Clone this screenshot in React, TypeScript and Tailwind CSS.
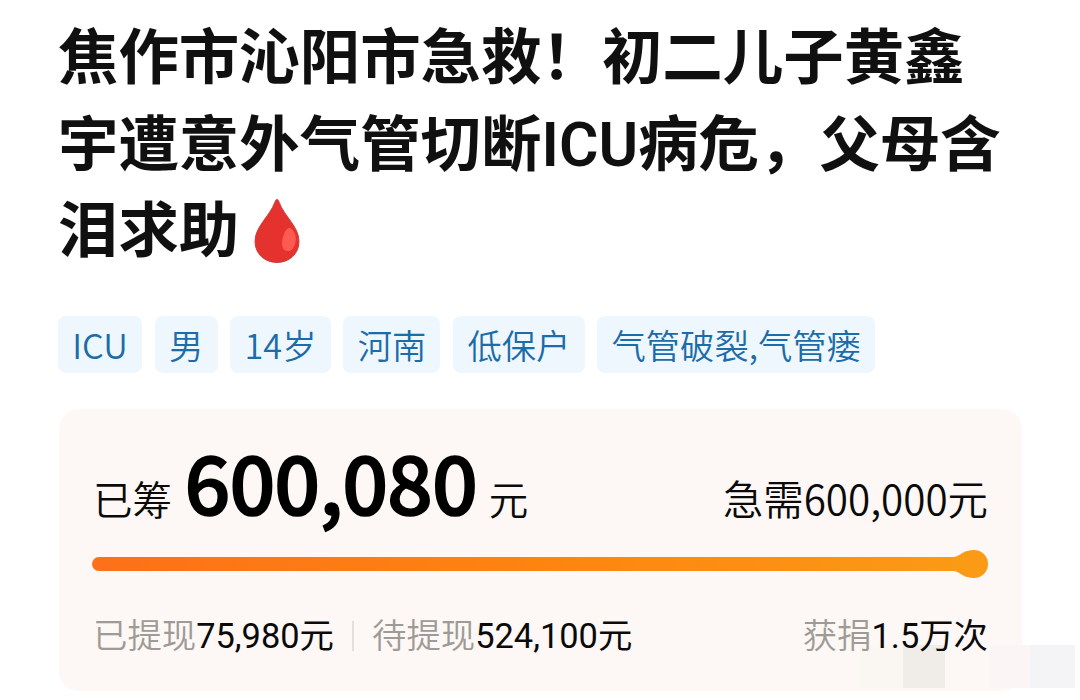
import React from 'react';

interface Stat {
  label: string;
  value: string;
}

const tags: string[] = ['ICU', '男', '14岁', '河南', '低保户', '气管破裂,气管瘘'];

const titleLines: string[] = ['焦作市沁阳市急救！初二儿子黄鑫', '宇遭意外气管切断ICU病危，父母含', '泪求助'];

const BloodDrop: React.FC = () => (
  <svg className="ml-[15px] mt-[9px] h-[66px] w-[46px]" viewBox="0 0 46 66">
    <path
      d="M23 1.5c-1.2 0-1.8 1.6-2.3 3C16 18 1 28.500 1 43.500 1 56 11 64.500 23 64.500S45 56 45 43.500C45 28.500 30 18 25.300 4.500c-.5-1.400-1.100-3-2.300-3z"
      fill="#e5322f"
      stroke="#c9423c"
      strokeWidth="1"
    />
    <path d="M36.500 30c4 3 6 8 5 14-1 6-4.500 9.500-8.500 9-4-.6-5.500-4.500-4.700-10.500.8-6 4-13.700 8.200-12.500z" fill="#ff5a50" />
  </svg>
);

const StatText: React.FC<Stat> = ({ label, value }) => (
  <span className="whitespace-nowrap">
    <span className="font-[350] text-[#9e9b96]">{label}</span>
    <span className="text-[#0a0a0a]">{value}</span>
  </span>
);

const ProgressBar: React.FC = () => (
  <div className="relative mt-[14px] h-7 w-[896px]">
    <div className="absolute left-0 top-[7px] h-[14px] w-[880px] rounded-l-full bg-linear-to-r from-[#fc7019] via-[#fd840f] to-[#fb9a15]" />
    <svg className="absolute right-0 top-0 h-7 w-9" viewBox="0 0 36 28">
      <path d="M0 7c5 0 7-2 11-4.300C14 1 18 0 22 0a14 14 0 0 1 0 28c-4 0-8-1-11-2.700C7 23 5 21 0 21z" fill="#fb9a15" />
    </svg>
  </div>
);

const App: React.FC = () => {
  return (
    <div className="relative h-[700px] w-[1080px] overflow-hidden bg-white pl-[59px] pt-4 font-['Noto_Sans_CJK_SC',sans-serif]">
      {/* Title */}
      <h1 className="-ml-px font-['Roboto','Noto_Sans_CJK_SC',sans-serif] text-[60.450px] font-semibold text-[#101010]">
        {titleLines.map((line, i) => (
          <span key={line} className="flex h-[86.500px] items-start whitespace-nowrap leading-[86.500px]">
            {line}
            {i === titleLines.length - 1 && <BloodDrop />}
          </span>
        ))}
      </h1>

      {/* Tags */}
      <div className="-ml-px mt-10 flex gap-[12.800px]">
        {tags.map(tag => (
          <span key={tag} className="h-[57px] whitespace-nowrap rounded-lg bg-[#eff7fe] px-[14.200px] text-[34.300px] font-[350] leading-[56px] text-[#1b6ca8]">
            {tag}
          </span>
        ))}
      </div>

      {/* Fundraising card */}
      <div className="relative mt-9 h-[282px] w-[963px] rounded-[20px] bg-[#fdf8f5] pl-[33px] pr-[34px] pt-[27px]">
        {/* Mosaic patch in the corner */}
        <div className="absolute left-[801px] top-[236px] flex h-[43px]">
          <div className="w-[43px] bg-[#faf6f2]" />
          <div className="w-[42px] bg-[#f0ede9]" />
          <div className="w-[45px] bg-[#fdf8f5]" />
          <div className="w-10 bg-[#fbf5f5]" />
          <div className="w-[45px] bg-[#f4f4f6]" />
        </div>

        <div className="relative flex h-[100px] items-baseline justify-between whitespace-nowrap text-[39.500px] font-[350] leading-[89px] text-[#0a0a0a]">
          <div className="flex items-baseline">
            <span className="ml-px">已筹</span>
            <span className="ml-[12.500px] text-[80.500px] font-medium tracking-[-1px] text-black [-webkit-text-stroke:1.6px_#000]">600,080</span>
            <span className="ml-3">元</span>
          </div>
          <span className="text-[40.400px]">急需600,000元</span>
        </div>

        <ProgressBar />

        <div className="relative mt-[33px] flex items-center justify-between pl-px font-['Roboto','Noto_Sans_CJK_SC',sans-serif] text-[34.400px] font-normal leading-[50px]">
          <div className="flex items-center">
            <StatText label="已提现" value="75,980元" />
            <span className="mx-[18px] h-[30px] w-0.5 bg-[#e3e0dc]" />
            <StatText label="待提现" value="524,100元" />
          </div>
          <StatText label="获捐" value="1.5万次" />
        </div>
      </div>
    </div>
  );
};

export default App;
